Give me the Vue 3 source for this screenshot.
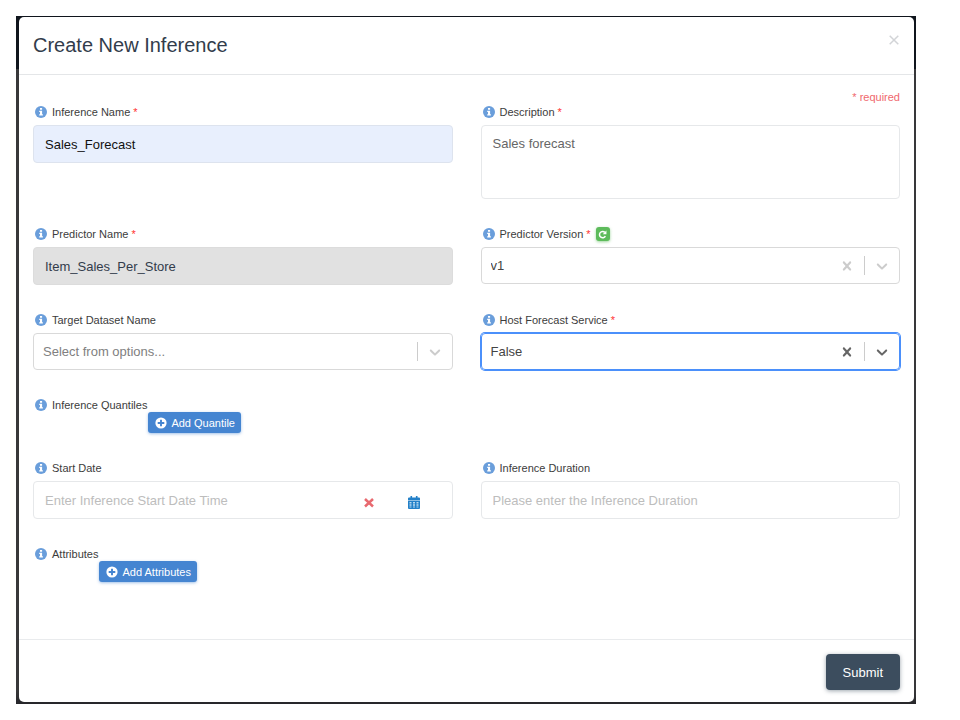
<script setup>
import { ref } from 'vue'

const name = ref('Sales_Forecast')
const description = ref('Sales forecast')
const predictor = ref('Item_Sales_Per_Store')
const version = ref('v1')
const target = ref('')
const host = ref('False')
const startDate = ref('')
const duration = ref('')
</script>

<template>
  <svg class="sprite" aria-hidden="true">
    <symbol id="i-info" viewBox="0 0 12 12">
      <circle cx="6" cy="6" r="6" fill="#6a9edb" />
      <path d="M5 2h2.100v1.800H5zM4.200 4.700h2.900v3.500h.8v1.400H4.200V8.200H5V6.100h-.8z" fill="#fff" />
    </symbol>
    <symbol id="i-plus" viewBox="0 0 12 12">
      <circle cx="6" cy="6" r="5.600" fill="#fff" />
      <path d="M6 2.700v6.600M2.700 6h6.600" stroke="#4585d1" stroke-width="1.900" fill="none" />
    </symbol>
    <symbol id="i-cross" viewBox="0 0 20 20">
      <path d="M14.348 14.849c-0.469 0.469-1.229 0.469-1.697 0l-2.651-3.030-2.651 3.029c-0.469 0.469-1.229 0.469-1.697 0-0.469-0.469-0.469-1.229 0-1.697l2.758-3.150-2.759-3.152c-0.469-0.469-0.469-1.228 0-1.697s1.228-0.469 1.697 0l2.652 3.031 2.651-3.031c0.469-0.469 1.228-0.469 1.697 0s0.469 1.229 0 1.697l-2.758 3.152 2.758 3.150c0.469 0.469 0.469 1.229 0 1.698z" fill="currentColor" />
    </symbol>
    <symbol id="i-chevron" viewBox="0 0 20 20">
      <path d="M4.516 7.548c0.436-0.446 1.043-0.481 1.576 0l3.908 3.747 3.908-3.747c0.533-0.481 1.141-0.446 1.574 0 0.436 0.445 0.408 1.197 0 1.615-0.406 0.418-4.695 4.502-4.695 4.502-0.217 0.223-0.502 0.335-0.787 0.335s-0.570-0.112-0.789-0.335c0 0-4.287-4.084-4.695-4.502s-0.436-1.170 0-1.615z" fill="currentColor" />
    </symbol>
  </svg>

  <div class="backdrop">
    <form class="modal" @submit.prevent>
      <header class="head">
        <h1>Create New Inference</h1>
        <button type="button" class="close" aria-label="Close">
          <svg viewBox="0 0 10 10"><path d="M.7.7l8.600 8.600M9.300.7L.7 9.300" stroke="#d2d4d7" stroke-width="1.500" /></svg>
        </button>
      </header>

      <div class="body">
        <p class="note">* required</p>
        <div class="grid">
          <div class="field">
            <div class="cap">
              <svg class="info"><use href="#i-info" /></svg>
              <label for="name">Inference Name <b>*</b></label>
            </div>
            <input id="name" v-model="name" class="box filled" type="text" />
          </div>
          <div class="field">
            <div class="cap">
              <svg class="info"><use href="#i-info" /></svg>
              <label for="description">Description <b>*</b></label>
            </div>
            <textarea id="description" v-model="description" class="box area"></textarea>
          </div>

          <div class="field">
            <div class="cap">
              <svg class="info"><use href="#i-info" /></svg>
              <label for="predictor">Predictor Name <b>*</b></label>
            </div>
            <input id="predictor" v-model="predictor" class="box locked" type="text" readonly />
          </div>
          <div class="field">
            <div class="cap">
              <svg class="info"><use href="#i-info" /></svg>
              <label for="version">Predictor Version <b>*</b></label>
              <button type="button" class="refresh" aria-label="Refresh versions">
                <svg viewBox="0 0 10 10">
                  <path d="M8.200 6.900A3.500 3.500 0 1 1 7.600 2.600" stroke="#fff" stroke-width="1.700" fill="none" />
                  <path d="M9.400.6v4.200H5.200z" fill="#fff" />
                </svg>
              </button>
            </div>
            <div class="pick">
              <select id="version" v-model="version"><option>v1</option></select>
              <button type="button" class="clear" aria-label="Clear version"><svg><use href="#i-cross" /></svg></button>
              <span class="bar"></span>
              <svg class="arrow"><use href="#i-chevron" /></svg>
            </div>
          </div>

          <div class="field">
            <div class="cap">
              <svg class="info"><use href="#i-info" /></svg>
              <label for="target">Target Dataset Name</label>
            </div>
            <div class="pick empty">
              <select id="target" v-model="target"><option value="">Select from options...</option></select>
              <span class="bar"></span>
              <svg class="arrow"><use href="#i-chevron" /></svg>
            </div>
          </div>
          <div class="field">
            <div class="cap">
              <svg class="info"><use href="#i-info" /></svg>
              <label for="host">Host Forecast Service <b>*</b></label>
            </div>
            <div class="pick active">
              <select id="host" v-model="host"><option>False</option><option>True</option></select>
              <button type="button" class="clear" aria-label="Clear host service"><svg><use href="#i-cross" /></svg></button>
              <span class="bar"></span>
              <svg class="arrow"><use href="#i-chevron" /></svg>
            </div>
          </div>

          <div class="field adder">
            <div class="cap">
              <svg class="info"><use href="#i-info" /></svg>
              <span>Inference Quantiles</span>
            </div>
            <button type="button" class="add"><svg><use href="#i-plus" /></svg>Add Quantile</button>
          </div>

          <div class="field">
            <div class="cap">
              <svg class="info"><use href="#i-info" /></svg>
              <label for="start">Start Date</label>
            </div>
            <div class="box date">
              <input id="start" v-model="startDate" type="text" placeholder="Enter Inference Start Date Time" />
              <button type="button" aria-label="Clear date">
                <svg viewBox="0 0 12 12"><path d="M2 2.500l8 7.500M10 2.500L2 10" stroke="#e8696f" stroke-width="2.500" /></svg>
              </button>
              <button type="button" aria-label="Open calendar">
                <svg viewBox="0 0 12 13">
                  <path d="M2.500 0h1.600v1.500h3.800V0h1.600v1.500H11a1 1 0 0 1 1 1V4H0V2.500a1 1 0 0 1 1-1h1.500z" fill="#2380c8" />
                  <path d="M0 4.600h12V12a1 1 0 0 1-1 1H1a1 1 0 0 1-1-1z" fill="#2380c8" />
                  <path d="M1.500 6h2v1.500h-2zM5 6h2v1.500H5zM8.500 6h2v1.500h-2zM1.500 8.200h2v1.500h-2zM5 8.200h2v1.500H5zM8.500 8.200h2v1.500h-2zM1.500 10.400h2v1.200h-2zM5 10.400h2v1.200H5zM8.500 10.400h2v1.200h-2z" fill="#b9daf1" />
                </svg>
              </button>
            </div>
          </div>
          <div class="field">
            <div class="cap">
              <svg class="info"><use href="#i-info" /></svg>
              <label for="duration">Inference Duration</label>
            </div>
            <input id="duration" v-model="duration" class="box" type="text" placeholder="Please enter the Inference Duration" />
          </div>

          <div class="field adder">
            <div class="cap">
              <svg class="info"><use href="#i-info" /></svg>
              <span>Attributes</span>
            </div>
            <button type="button" class="add"><svg><use href="#i-plus" /></svg>Add Attributes</button>
          </div>
        </div>
      </div>

      <footer class="foot">
        <button type="submit" class="submit">Submit</button>
      </footer>
    </form>
  </div>
</template>

<style>
body {
  background: #fff;
}
</style>

<style scoped>
.sprite {
  position: absolute;
  width: 0;
  height: 0;
}
.backdrop {
  margin: 16px 44px 16px 16px;
  padding: 1px 2px 2px 3px;
  background: linear-gradient(#10151d 0, #10151d 53px, #38383a 53px, #38383a 98%, #26262a 100%);
  font-family: "Liberation Sans", Arial, sans-serif;
}
.modal,
.modal * {
  box-sizing: border-box;
}
.modal {
  background: #fff;
  border-radius: 5px;
  color: #3c3c3c;
  font-size: 11px;
}
button,
input,
select,
textarea {
  font: inherit;
  color: inherit;
  margin: 0;
}
button {
  border: 0;
  padding: 0;
  background: none;
  display: flex;
  align-items: center;
  justify-content: center;
}
.head {
  display: flex;
  justify-content: space-between;
  align-items: flex-start;
  padding: 16px 14px 17px;
  border-bottom: 1px solid #e4e6e8;
}
h1 {
  margin: 0;
  font-size: 20px;
  line-height: 24px;
  font-weight: 400;
  color: #323c4b;
}
.close {
  width: 12px;
  height: 14px;
}
.close svg {
  width: 10px;
  height: 10px;
}
.body {
  padding: 15px 14px 57px;
}
.note {
  margin: 0;
  text-align: right;
  line-height: 14px;
  color: #f0686d;
}
.grid {
  display: grid;
  grid-template-columns: 1fr 1fr;
  gap: 27px 28px;
}
.field {
  display: flex;
  flex-direction: column;
  gap: 5px;
  min-width: 0;
}
.cap {
  display: flex;
  align-items: center;
  gap: 5px;
  height: 16px;
  padding-left: 2px;
  line-height: 16px;
  white-space: nowrap;
}
.cap b {
  color: #f33;
  font-weight: 400;
}
.info {
  width: 12px;
  height: 12px;
}
.refresh {
  width: 14px;
  height: 14px;
  border-radius: 3px;
  background: #5dbb5b;
  box-shadow: 0 1px 3px #5dbb5b99;
}
.refresh svg {
  width: 9px;
  height: 9px;
}
.box {
  width: 100%;
  height: 38px;
  padding: 0 11px;
  border: 1px solid #e6e8ea;
  border-radius: 4px;
  background: #fff;
  font-size: 13px;
  outline: 0;
}
.box.filled {
  background: #e8effd;
  border-color: #dde3ee;
  color: #111;
}
.box.locked {
  background: #e1e1e1;
  border-color: #dcdcdc;
  color: #323c4b;
}
.box.area {
  display: block;
  height: 74px;
  padding: 9px 11px;
  line-height: 18px;
  color: #666;
  resize: none;
}
::placeholder {
  color: #bdbdbd;
  opacity: 1;
}
.pick {
  display: grid;
  grid-template-columns: 1fr 34px 1px 34px;
  align-items: center;
  height: 37px;
  border: 1px solid #d9d9d9;
  border-radius: 4px;
  font-size: 13px;
  color: #ccc;
}
.pick select {
  grid-area: 1 / 1 / 2 / 5;
  height: 100%;
  width: 100%;
  padding: 0 9px;
  border: 0;
  outline: 0;
  appearance: none;
  background: none;
  color: #444;
}
.pick.empty select {
  color: #808080;
}
.pick.active {
  border-color: #4b90fb;
  box-shadow: 0 0 0 1px #4b90fb;
  color: #666;
}
.clear {
  grid-area: 1 / 2;
}
.pick svg {
  width: 18px;
  height: 18px;
}
.bar {
  grid-area: 1 / 3;
  height: 19px;
  background: #ccc;
}
.arrow {
  grid-area: 1 / 4;
  justify-self: center;
  pointer-events: none;
}
.adder {
  flex-direction: row;
  gap: 1px;
  grid-column: 1 / -1;
}
.add {
  height: 21px;
  margin-top: 15px;
  padding: 0 6px 0 7px;
  gap: 4px;
  border-radius: 3px;
  background: #4585d1;
  box-shadow: 0 1px 3px #4585d180;
  color: #fff;
}
.add svg {
  width: 12px;
  height: 12px;
}
.date {
  display: flex;
  align-items: center;
  padding-right: 32px;
  gap: 33px;
}
.date input {
  flex: 1;
  min-width: 0;
  padding: 0;
  border: 0;
  outline: 0;
  background: none;
}
.date button {
  padding-top: 4px;
}
.date svg {
  width: 12px;
  height: 13px;
}
.foot {
  display: flex;
  justify-content: flex-end;
  padding: 14px 14px 12px;
  border-top: 1px solid #e9ebed;
}
.submit {
  height: 36px;
  padding: 0 17px;
  border-radius: 4px;
  background: #3c4d5e;
  box-shadow: 0 1px 4px #3c4d5e80;
  color: #fff;
  font-size: 13px;
}
</style>
